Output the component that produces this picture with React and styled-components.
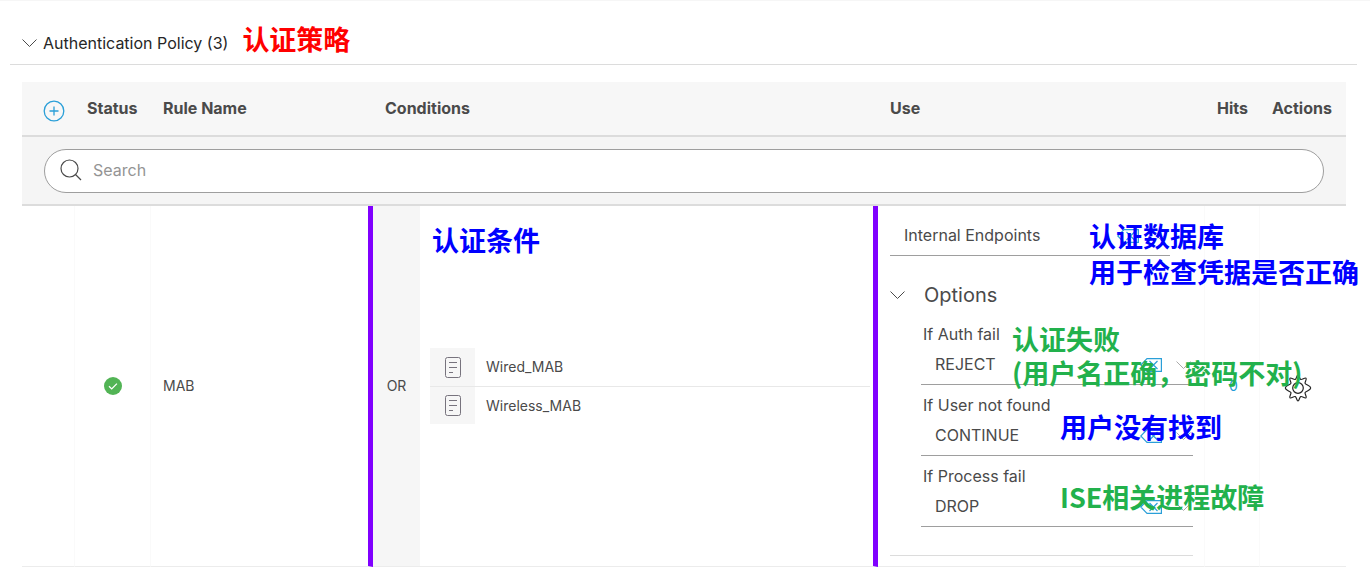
import React from 'react';
import styled, { createGlobalStyle } from 'styled-components';

const GlobalStyle = createGlobalStyle`
  * { box-sizing: border-box; }
  body {
    margin: 0;
    background: #fff;
    color: #4a4a4a;
    font-family: Inter, "Noto Sans CJK SC", sans-serif;
    font-size: 16px;
    line-height: 20px;
  }
  button, select, input { font: inherit; color: inherit; }
`;

const Page = styled.main`
  padding: 0 13px 0 10px;
  border-top: 1px solid #f6f6f6;
`;

const PanelHeader = styled.header`
  display: flex;
  align-items: flex-start;
  gap: 14px;
  height: 64px;
  padding: 20px 12px 0;
  border-bottom: 1px solid #dcdcdc;
`;

const Toggle = styled.button`
  display: flex;
  align-items: center;
  gap: ${(p) => (p.$large ? '19px' : '6px')};
  padding: 0;
  border: 0;
  background: none;
  color: ${(p) => (p.$large ? '#4a4a4a' : '#262626')};
  font-size: ${(p) => (p.$large ? '20px' : '16px')};
  line-height: ${(p) => (p.$large ? '24px' : '44px')};
`;

const Note = styled.span`
  color: ${(p) => p.$color};
  font-family: "Noto Sans CJK SC", sans-serif;
  font-size: 27px;
  font-weight: 700;
  line-height: ${(p) => (p.$tight ? '34px' : '36px')};
  white-space: nowrap;
`;

const PinnedNote = styled(Note)`
  position: absolute;
  z-index: 2;
  top: ${(p) => p.$top}px;
  left: ${(p) => p.$left}px;
  pointer-events: none;
`;

const RulesTable = styled.table`
  width: calc(100% - 23px);
  margin: 17px 11px 0 12px;
  table-layout: fixed;
  border-collapse: separate;
  border-spacing: 0;
`;

const Col = styled.col`
  width: ${(p) => (p.$width ? `${p.$width}px` : 'auto')};
`;

const HeadCell = styled.th`
  height: 55px;
  padding: 0 0 1px 12px;
  border-bottom: 2px solid #dcdcdc;
  background: #f7f7f7;
  text-align: left;
  font-weight: 700;
  white-space: nowrap;
`;

const AddButton = styled.button`
  display: block;
  margin-left: 9px;
  padding: 5px 0 0;
  border: 0;
  background: none;
  svg { display: block; }
`;

const SearchCell = styled.td`
  padding: 12px 22px 11px;
  border-bottom: 2px solid #dcdcdc;
  background: #f5f5f5;
`;

const SearchBox = styled.label`
  display: flex;
  align-items: center;
  gap: 11px;
  height: 44px;
  padding: 0 15px 2px;
  border: 1px solid #9e9e9e;
  border-radius: 22px;
  background: #fff;
`;

const SearchInput = styled.input`
  flex: 1;
  min-width: 0;
  padding: 0 0 1px;
  border: 0;
  outline: 0;
  background: none;
  &::placeholder { color: #949494; opacity: 1; }
`;

const Cell = styled.td`
  position: relative;
  height: 361px;
  padding: ${(p) => p.$padding || '0 0 0 12px'};
  border-bottom: 1px solid #ececec;
  border-right: ${(p) => (p.$marked ? '5px solid #8000ff' : p.$ruled ? '1px solid #fafafa' : '0')};
  background: ${(p) => (p.$shaded ? '#f6f6f6' : 'transparent')};
  text-align: ${(p) => (p.$center ? 'center' : 'left')};
  vertical-align: ${(p) => (p.$top ? 'top' : 'middle')};
  font-size: 14px;
`;

const StatusMark = styled.span`
  display: grid;
  place-items: center;
`;

const ConditionList = styled.ul`
  margin: 0;
  padding: 0;
  list-style: none;
`;

const Condition = styled.li`
  display: flex;
  align-items: center;
  gap: 11px;
  height: 38px;
  & + & { border-top: 1px solid #e8e8e8; }
`;

const ConditionIcon = styled.span`
  display: grid;
  place-items: center;
  width: 45px;
  height: 100%;
  background: #f6f6f6;
`;

const UsePanel = styled.div`
  width: 303px;
  padding-bottom: 28px;
  border-bottom: 1px solid #dcdcdc;
  font-size: 16px;
`;

const SelectBox = styled.div`
  position: relative;
  display: flex;
  width: ${(p) => (p.$width ? `${p.$width}px` : '100%')};
  height: 40px;
  border-bottom: 1px solid #9e9e9e;
`;

const Select = styled.select`
  width: 100%;
  padding: 0 56px 1px 14px;
  border: 0;
  appearance: none;
  background: transparent;
`;

const SelectTools = styled.div`
  position: absolute;
  top: 13px;
  right: 2px;
  display: flex;
  align-items: center;
  gap: 14px;
`;

const ClearButton = styled.button`
  display: flex;
  padding: 0;
  border: 0;
  background: none;
`;

const Options = styled.section`
  margin-top: 27px;
`;

const Fields = styled.div`
  display: grid;
  gap: 10px;
  margin: 17px 0 0 31px;
`;

const FieldLabel = styled.label`
  display: block;
  height: 21px;
  padding-left: 2px;
`;

const HitsLink = styled.a`
  color: #1d9bd8;
  text-decoration: none;
`;

const GearButton = styled.button`
  display: block;
  padding: 4px 0 0;
  border: 0;
  background: none;
  svg { display: block; }
`;

const ChevronDown = ({ color = '#4a4a4a' }) => (
  <svg width="15" height="13" viewBox="0 0 15 13" fill="none" stroke={color} aria-hidden="true">
    <path d="M.5 2.500 7.500 9.500l7-7" />
  </svg>
);

const PlusIcon = () => (
  <svg width="22" height="22" viewBox="0 0 22 22" fill="none" stroke="#2a9fd8" strokeWidth="1.300" aria-hidden="true">
    <circle cx="11" cy="11" r="9.800" />
    <path d="M11 6.500v9M6.500 11h9" />
  </svg>
);

const SearchIcon = () => (
  <svg width="22" height="22" viewBox="0 0 22 22" fill="none" stroke="#4a4a4a" strokeWidth="1.200" aria-hidden="true">
    <circle cx="9.500" cy="9.500" r="8.500" />
    <path d="m15.500 15.500 5.500 5.500" />
  </svg>
);

const CheckIcon = () => (
  <svg width="18" height="18" viewBox="0 0 18 18" role="img" aria-label="Enabled">
    <circle cx="9" cy="9" r="9" fill="#52b455" />
    <path d="m5 9.300 2.700 2.600 5.200-5.300" fill="none" stroke="#fff" strokeWidth="1.300" />
  </svg>
);

const DocumentIcon = () => (
  <svg width="16" height="21" viewBox="0 0 16 21" fill="none" stroke="#77737d" aria-hidden="true">
    <rect x=".5" y=".5" width="15" height="20" rx="2" />
    <path d="M4 5.500h8M4 10.500h8M4 15.500h4" />
  </svg>
);

const ClearIcon = () => (
  <svg width="22" height="14" viewBox="0 0 22 14" fill="none" stroke="#2a9fd8" strokeWidth="1.200" aria-hidden="true">
    <path d="M7 .6h14.400v12.800H7L.8 7zM9.500 3l8 8M17.500 3l-8 8" />
  </svg>
);

const GearIcon = () => (
  <svg width="28" height="28" viewBox="0 0 28 28" fill="none" stroke="#222" strokeWidth="1.200" strokeLinejoin="round" aria-hidden="true">
    <circle cx="14" cy="14" r="5.300" />
    <path d="M14 1c1.300 0 1.300 3.800 2.700 4.400 1.500.6 4.100-2.200 5.300-1.200 1.100 1-1.500 3.900-.9 5.200.6 1.500 5.600 2.300 5.600 4.600s-5 3.100-5.600 4.600c-.6 1.300 2 4.200.9 5.200-1.200 1-3.800-1.800-5.300-1.200C15.300 23.200 15.300 27 14 27s-1.300-3.800-2.700-4.400c-1.500-.6-4.100 2.200-5.300 1.200-1.100-1 1.500-3.900.9-5.200C6.300 17.100 1.300 16.300 1.300 14s5-3.100 5.600-4.600C7.500 8.100 4.900 5.200 6 4.200c1.200-1 3.800 1.800 5.300 1.200C12.700 4.800 12.700 1 14 1z" />
  </svg>
);

const columns = [53, 76, 222, 47, 0, 327, 55, 86];

const failureActions = [
  { id: 'auth-fail', label: 'If Auth fail', value: 'REJECT' },
  { id: 'user-not-found', label: 'If User not found', value: 'CONTINUE' },
  { id: 'process-fail', label: 'If Process fail', value: 'DROP' },
];

function SelectField({ id, options, value, width, label }) {
  return (
    <SelectBox $width={width}>
      <Select id={id} defaultValue={value} aria-label={label}>
        {options.map((option) => <option key={option}>{option}</option>)}
      </Select>
      <SelectTools>
        <ClearButton type="button" aria-label="Clear"><ClearIcon /></ClearButton>
        <ChevronDown color="#aaa" />
      </SelectTools>
    </SelectBox>
  );
}

export default function App() {
  return (
    <>
      <GlobalStyle />
      <Page>
        <PanelHeader>
          <Toggle type="button"><ChevronDown />Authentication Policy (3)</Toggle>
          <Note $color="#ff0000">认证策略</Note>
        </PanelHeader>

        <RulesTable>
          <colgroup>{columns.map((width, i) => <Col key={i} $width={width} />)}</colgroup>
          <thead>
            <tr>
              <HeadCell><AddButton type="button" aria-label="Add rule"><PlusIcon /></AddButton></HeadCell>
              <HeadCell>Status</HeadCell>
              <HeadCell>Rule Name</HeadCell>
              <HeadCell colSpan={2}>Conditions</HeadCell>
              <HeadCell>Use</HeadCell>
              <HeadCell>Hits</HeadCell>
              <HeadCell>Actions</HeadCell>
            </tr>
            <tr>
              <SearchCell colSpan={8}>
                <SearchBox>
                  <SearchIcon />
                  <SearchInput type="text" placeholder="Search" aria-label="Search" />
                </SearchBox>
              </SearchCell>
            </tr>
          </thead>
          <tbody>
            <tr>
              <Cell $ruled />
              <Cell $ruled $padding="0"><StatusMark><CheckIcon /></StatusMark></Cell>
              <Cell $marked>MAB</Cell>
              <Cell $shaded $center $padding="0">OR</Cell>
              <Cell $marked $padding="0 3px 0 10px">
                <PinnedNote $color="#0000ff" $top={16} $left={12}>认证条件</PinnedNote>
                <ConditionList>
                  {['Wired_MAB', 'Wireless_MAB'].map((name) => (
                    <Condition key={name}>
                      <ConditionIcon><DocumentIcon /></ConditionIcon>
                      {name}
                    </Condition>
                  ))}
                </ConditionList>
              </Cell>
              <Cell $ruled $top $padding="10px 0 9px 12px">
                <UsePanel>
                  <SelectField label="Identity source" width={280} value="Internal Endpoints" options={['Internal Endpoints']} />
                  <Options>
                    <Toggle type="button" $large><ChevronDown />Options</Toggle>
                    <Fields>
                      {failureActions.map(({ id, label, value }) => (
                        <div key={id}>
                          <FieldLabel htmlFor={id}>{label}</FieldLabel>
                          <SelectField id={id} value={value} options={['REJECT', 'CONTINUE', 'DROP']} />
                        </div>
                      ))}
                    </Fields>
                  </Options>
                </UsePanel>
                <PinnedNote $color="#0000ff" $top={12} $left={211}>认证数据库<br />用于检查凭据是否正确</PinnedNote>
                <PinnedNote $color="#22b14c" $tight $top={116} $left={134}>认证失败<br />(用户名正确，密码不对)</PinnedNote>
                <PinnedNote $color="#0000ff" $top={203} $left={182}>用户没有找到</PinnedNote>
                <PinnedNote $color="#22b14c" $top={273} $left={182}>ISE相关进程故障</PinnedNote>
              </Cell>
              <Cell $ruled $padding="0 0 0 24px"><HitsLink href="#hits">0</HitsLink></Cell>
              <Cell $padding="0 0 0 24px"><GearButton type="button" aria-label="Rule actions"><GearIcon /></GearButton></Cell>
            </tr>
          </tbody>
        </RulesTable>
      </Page>
    </>
  );
}
